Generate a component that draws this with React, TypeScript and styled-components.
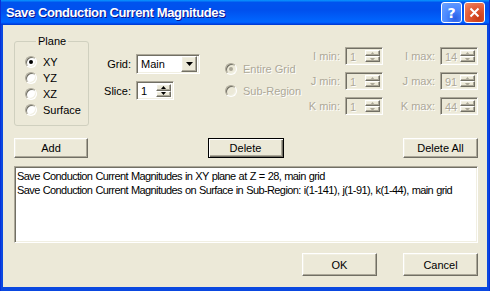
import React from "react";
import styled, { createGlobalStyle, css } from "styled-components";

const Global = createGlobalStyle`
  html, body {
    margin: 0;
    padding: 0;
    background: #fff;
  }
  body {
    font-family: "Liberation Sans", Arial, sans-serif;
    font-size: 11px;
    color: #000;
  }
`;

const sunken = css`
  box-sizing: border-box;
  border: 1px solid;
  border-color: #aca899 #fff #fff #aca899;
  box-shadow: inset 1px 1px 0 #716f64, inset -1px -1px 0 #f1efe2;
`;

const raised = css`
  box-sizing: border-box;
  border: 1px solid;
  border-color: #fff #716f64 #716f64 #fff;
  box-shadow: inset -1px -1px 0 #aca899, inset 1px 1px 0 #f1efe2;
  background: #ece9d8;
`;

const Window = styled.div`
  width: 490px;
  height: 291px;
  display: flex;
  flex-direction: column;
  background: #0a48e0;
  border-left: 1px solid #0831d9;
  border-right: 1px solid #0831d9;
  box-sizing: border-box;
`;

const TitleBar = styled.div`
  height: 25px;
  flex: none;
  display: flex;
  align-items: center;
  justify-content: space-between;
  padding: 0 4px 0 5px;
  background: linear-gradient(
    to bottom,
    #0997ff 0%,
    #0053ee 10%,
    #0050ee 40%,
    #0066ff 86%,
    #005bff 92%,
    #003dd7 96%,
    #003dd7 100%
  );
`;

const Title = styled.span`
  color: #fff;
  font-family: "Liberation Sans", Arial, sans-serif;
  font-weight: bold;
  font-size: 13px;
  letter-spacing: -0.4px;
  text-shadow: 1px 1px 0 #0f1089;
`;

const CaptionButtons = styled.div`
  display: flex;
  gap: 2px;
`;

const CaptionButton = styled.div<{ $kind: "help" | "close" }>`
  width: 21px;
  height: 21px;
  box-sizing: border-box;
  border: 1px solid #fff;
  border-radius: 3px;
  display: flex;
  align-items: center;
  justify-content: center;
  color: #fff;
  font-family: "DejaVu Sans", sans-serif;
  font-weight: bold;
  font-size: 14px;
  background: ${({ $kind }) =>
    $kind === "help"
      ? "radial-gradient(circle at 70% 80%, #2a5fe6 0%, #4a88ff 45%, #6ea4ff 100%)"
      : "radial-gradient(circle at 70% 80%, #c93a15 0%, #e25a34 50%, #f08a6a 100%)"};
`;

const Body = styled.div`
  flex: 1;
  margin: 0 2px 4px 2px;
  background: #ece9d8;
  display: flex;
  flex-direction: column;
  padding: 10px 9px 0 11px;
`;

const TopRow = styled.div`
  display: flex;
  align-items: flex-start;
  height: 91px;
`;

const GroupBox = styled.fieldset`
  box-sizing: border-box;
  width: 75px;
  height: 91px;
  margin: 0;
  padding: 0 0 0 10px;
  border: 1px solid #d0d0bf;
  border-radius: 3px;
`;

const Legend = styled.legend`
  padding: 0 2px;
  margin-left: 11px;
  line-height: 13px;
  font-size: 11px;
`;

const RadioList = styled.div<{ $top: number; $left?: number; $gap?: number }>`
  display: flex;
  flex-direction: column;
  gap: ${({ $gap }) => $gap ?? 0}px;
  margin-top: ${({ $top }) => $top}px;
  margin-left: ${({ $left }) => $left ?? 0}px;
`;

const RadioRow = styled.label<{ $disabled?: boolean }>`
  display: flex;
  align-items: center;
  gap: 6px;
  height: 16px;
  color: ${({ $disabled }) => ($disabled ? "#aca899" : "#000")};
  text-shadow: ${({ $disabled }) => ($disabled ? "1px 1px 0 #fff" : "none")};
`;

const RadioCircle = styled.span<{ $checked?: boolean; $disabled?: boolean }>`
  position: relative;
  width: 12px;
  height: 12px;
  box-sizing: border-box;
  border-radius: 50%;
  border: 1px solid;
  border-color: #aca899 #fff #fff #aca899;
  box-shadow: inset 1px 1px 0 #716f64, inset -1px -1px 0 #f1efe2;
  background: ${({ $disabled }) => ($disabled ? "#ece9d8" : "#fff")};
  flex: none;
  &::after {
    content: "";
    display: ${({ $checked }) => ($checked ? "block" : "none")};
    position: absolute;
    left: 3px;
    top: 3px;
    width: 4px;
    height: 4px;
    border-radius: 50%;
    background: ${({ $disabled }) => ($disabled ? "#aca899" : "#000")};
  }
`;

const FieldGrid = styled.div`
  display: grid;
  grid-template-columns: 28px auto;
  column-gap: 5px;
  row-gap: 7px;
  align-items: center;
  margin: 19px 0 0 14px;
`;

const FieldLabel = styled.span<{ $disabled?: boolean }>`
  text-align: right;
  white-space: nowrap;
  color: ${({ $disabled }) => ($disabled ? "#aca899" : "#000")};
  text-shadow: ${({ $disabled }) => ($disabled ? "1px 1px 0 #fff" : "none")};
`;

const Combo = styled.div`
  ${sunken};
  width: 64px;
  height: 20px;
  background: #fff;
  display: flex;
  align-items: center;
  padding: 2px;
  justify-content: space-between;
`;

const ComboText = styled.span`
  padding-left: 2px;
`;

const ComboArrow = styled.span`
  ${raised};
  width: 16px;
  height: 16px;
  display: flex;
  align-items: center;
  justify-content: center;
`;

const Spin = styled.div<{ $disabled?: boolean }>`
  ${sunken};
  width: 38px;
  height: ${({ $disabled }) => ($disabled ? 18 : 19)}px;
  background: ${({ $disabled }) => ($disabled ? "#ece9d8" : "#fff")};
  display: flex;
  align-items: stretch;
  padding: 2px;
`;

const SpinText = styled.span<{ $disabled?: boolean }>`
  flex: 1;
  padding-left: 2px;
  line-height: 14px;
  color: ${({ $disabled }) => ($disabled ? "#aca899" : "#000")};
  text-shadow: ${({ $disabled }) => ($disabled ? "1px 1px 0 #fff" : "none")};
`;

const SpinButtons = styled.span`
  width: 15px;
  display: flex;
  flex-direction: column;
`;

const SpinBtn = styled.span`
  ${raised};
  flex: 1;
  display: flex;
  align-items: center;
  justify-content: center;
`;

const RangeGrid = styled.div`
  margin: 12px 0 0 auto;
  display: grid;
  grid-template-columns: 36px 38px 47px 38px;
  grid-auto-rows: 18px;
  column-gap: 5px;
  row-gap: 7px;
  align-items: center;
`;

const ButtonRow = styled.div<{ $top: number; $end?: boolean }>`
  display: flex;
  justify-content: ${({ $end }) => ($end ? "flex-end" : "space-between")};
  gap: 26px;
  margin-top: ${({ $top }) => $top}px;
`;

const Button = styled.button<{ $w: number; $h: number; $default?: boolean }>`
  ${raised};
  width: ${({ $w }) => $w}px;
  height: ${({ $h }) => $h}px;
  padding: 0;
  font-family: "Liberation Sans", Arial, sans-serif;
  font-size: 11px;
  color: #000;
  ${({ $default }) =>
    $default &&
    css`
      border-color: #000;
      box-shadow: inset 1px 1px 0 #fff, inset -1px -1px 0 #716f64,
        inset -2px -2px 0 #aca899;
    `}
`;

const ListBox = styled.div`
  ${sunken};
  margin-top: 8px;
  height: 77px;
  background: #fff;
  padding: 2px 2px 2px 1px;
  overflow: hidden;
  white-space: nowrap;
`;

const ListLine = styled.div`
  line-height: 14px;
  padding-left: 1px;
  letter-spacing: -0.6px;
  word-spacing: 0.6px;
`;

const Tri = ({ up, size = 7 }: { up?: boolean; size?: number }) => (
  <svg width={size} height={Math.ceil(size / 2)} viewBox={`0 0 ${size} ${Math.ceil(size / 2)}`}>
    <polygon
      points={
        up
          ? `${size / 2},0 ${size},${Math.ceil(size / 2)} 0,${Math.ceil(size / 2)}`
          : `0,0 ${size},0 ${size / 2},${Math.ceil(size / 2)}`
      }
      fill="#000"
    />
  </svg>
);

const SmallTri = ({ up, disabled }: { up?: boolean; disabled?: boolean }) => (
  <svg width="5" height="3" viewBox="0 0 5 3">
    <polygon
      points={up ? "2.5,0 5,3 0,3" : "0,0 5,0 2.5,3"}
      fill={disabled ? "#aca899" : "#000"}
    />
  </svg>
);

const Spinner = ({ value, disabled }: { value: string; disabled?: boolean }) => (
  <Spin $disabled={disabled}>
    <SpinText $disabled={disabled}>{value}</SpinText>
    <SpinButtons>
      <SpinBtn>
        <SmallTri up disabled={disabled} />
      </SpinBtn>
      <SpinBtn>
        <SmallTri disabled={disabled} />
      </SpinBtn>
    </SpinButtons>
  </Spin>
);

const ranges = [
  ["I", "1", "14"],
  ["J", "1", "91"],
  ["K", "1", "44"],
];

export default function App() {
  return (
    <>
      <Global />
      <Window>
        <TitleBar>
          <Title>Save Conduction Current Magnitudes</Title>
          <CaptionButtons>
            <CaptionButton $kind="help">?</CaptionButton>
            <CaptionButton $kind="close">
              <svg width="11" height="11" viewBox="0 0 11 11">
                <path d="M1.5 1.5 L9.5 9.5 M9.5 1.5 L1.5 9.5" stroke="#fff" strokeWidth="2" />
              </svg>
            </CaptionButton>
          </CaptionButtons>
        </TitleBar>
        <Body>
          <TopRow>
            <GroupBox>
              <Legend>Plane</Legend>
              <RadioList $top={6}>
                <RadioRow>
                  <RadioCircle $checked />
                  XY
                </RadioRow>
                <RadioRow>
                  <RadioCircle />
                  YZ
                </RadioRow>
                <RadioRow>
                  <RadioCircle />
                  XZ
                </RadioRow>
                <RadioRow>
                  <RadioCircle />
                  Surface
                </RadioRow>
              </RadioList>
            </GroupBox>
            <FieldGrid>
              <FieldLabel>Grid:</FieldLabel>
              <Combo>
                <ComboText>Main</ComboText>
                <ComboArrow>
                  <Tri />
                </ComboArrow>
              </Combo>
              <FieldLabel>Slice:</FieldLabel>
              <Spinner value="1" />
            </FieldGrid>
            <RadioList $top={26} $left={25} $gap={6}>
              <RadioRow $disabled>
                <RadioCircle $checked $disabled />
                Entire Grid
              </RadioRow>
              <RadioRow $disabled>
                <RadioCircle $disabled />
                Sub-Region
              </RadioRow>
            </RadioList>
            <RangeGrid>
              {ranges.map(([axis, min, max]) => (
                <React.Fragment key={axis}>
                  <FieldLabel $disabled>{axis} min:</FieldLabel>
                  <Spinner value={min} disabled />
                  <FieldLabel $disabled>{axis} max:</FieldLabel>
                  <Spinner value={max} disabled />
                </React.Fragment>
              ))}
            </RangeGrid>
          </TopRow>
          <ButtonRow $top={12}>
            <Button $w={74} $h={20}>Add</Button>
            <Button $w={76} $h={20} $default>
              Delete
            </Button>
            <Button $w={75} $h={20}>Delete All</Button>
          </ButtonRow>
          <ListBox>
            <ListLine>Save Conduction Current Magnitudes in XY plane at Z = 28, main grid</ListLine>
            <ListLine>
              Save Conduction Current Magnitudes on Surface in Sub-Region: i(1-141), j(1-91), k(1-44), main grid
            </ListLine>
          </ListBox>
          <ButtonRow $top={10} $end>
            <Button $w={75} $h={23}>OK</Button>
            <Button $w={75} $h={23}>Cancel</Button>
          </ButtonRow>
        </Body>
      </Window>
    </>
  );
}
